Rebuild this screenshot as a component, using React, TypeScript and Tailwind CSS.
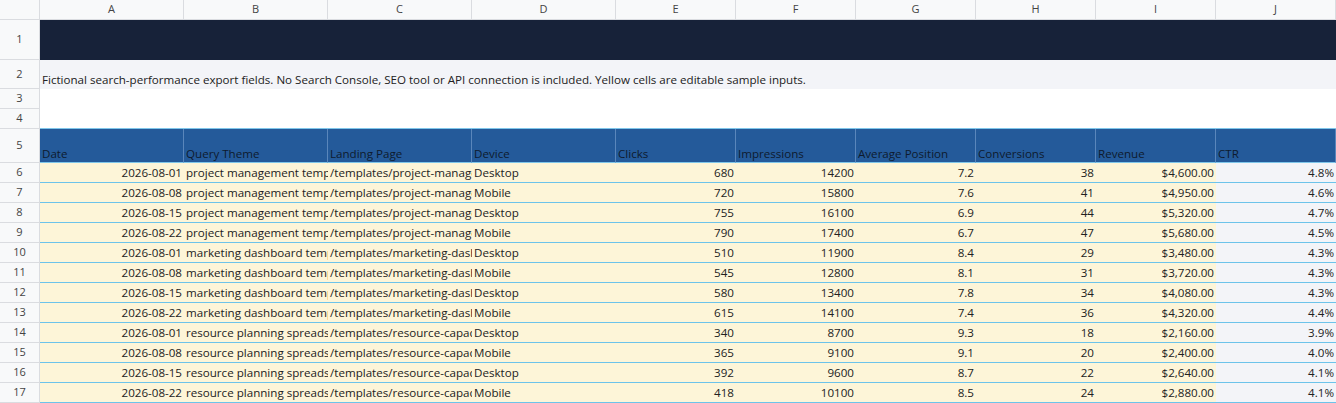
import * as React from "react"

const cols = ["A", "B", "C", "D", "E", "F", "G", "H", "I", "J"]
const heads = ["Date", "Query Theme", "Landing Page", "Device", "Clicks", "Impressions", "Average Position", "Conversions", "Revenue", "CTR"]

const rows: string[][] = [
  ["2026-08-01", "project management templates", "/templates/project-management", "Desktop", "680", "14200", "7.2", "38", "$4,600.00", "4.8%"],
  ["2026-08-08", "project management templates", "/templates/project-management", "Mobile", "720", "15800", "7.6", "41", "$4,950.00", "4.6%"],
  ["2026-08-15", "project management templates", "/templates/project-management", "Desktop", "755", "16100", "6.9", "44", "$5,320.00", "4.7%"],
  ["2026-08-22", "project management templates", "/templates/project-management", "Mobile", "790", "17400", "6.7", "47", "$5,680.00", "4.5%"],
  ["2026-08-01", "marketing dashboard templates", "/templates/marketing-dashboard", "Desktop", "510", "11900", "8.4", "29", "$3,480.00", "4.3%"],
  ["2026-08-08", "marketing dashboard templates", "/templates/marketing-dashboard", "Mobile", "545", "12800", "8.1", "31", "$3,720.00", "4.3%"],
  ["2026-08-15", "marketing dashboard templates", "/templates/marketing-dashboard", "Desktop", "580", "13400", "7.8", "34", "$4,080.00", "4.3%"],
  ["2026-08-22", "marketing dashboard templates", "/templates/marketing-dashboard", "Mobile", "615", "14100", "7.4", "36", "$4,320.00", "4.4%"],
  ["2026-08-01", "resource planning spreadsheet", "/templates/resource-capacity", "Desktop", "340", "8700", "9.3", "18", "$2,160.00", "3.9%"],
  ["2026-08-08", "resource planning spreadsheet", "/templates/resource-capacity", "Mobile", "365", "9100", "9.1", "20", "$2,400.00", "4.0%"],
  ["2026-08-15", "resource planning spreadsheet", "/templates/resource-capacity", "Desktop", "392", "9600", "8.7", "22", "$2,640.00", "4.1%"],
  ["2026-08-22", "resource planning spreadsheet", "/templates/resource-capacity", "Mobile", "418", "10100", "8.5", "24", "$2,880.00", "4.1%"],
]

const grid = "grid grid-cols-[40px_144px_144px_144px_144px_120px_120px_120px_120px_120px_120px]"
const rowHead = "flex items-center justify-center border-r border-b border-[#dadce0] bg-[#f8f9fa] text-[#444] text-[11px]"

export default function App() {
  return (
    <div className="w-[1336px] h-[403px] overflow-hidden bg-white text-[11.6px] text-[#222]" style={{ fontFamily: '"Open Sans", "Noto Sans", sans-serif' }}>
      <div className={`${grid} h-[20px]`}>
        <div className="border-r border-b border-[#dadce0] bg-[#f8f9fa]" />
        {cols.map((c) => (
          <div key={c} className="flex items-center justify-center border-r border-b border-[#dadce0] bg-[#f8f9fa] text-[#444] text-[11px]">{c}</div>
        ))}
      </div>
      <div className={`${grid} h-[40px]`}>
        <div className={rowHead}>1</div>
        <div className="col-span-10 bg-[#172239]" />
      </div>
      <div className={`${grid} h-[29px]`}>
        <div className={rowHead}>2</div>
        <div className="col-span-10 bg-[#f3f4f8] flex items-end pl-[2px] pb-[1px] whitespace-nowrap">
          Fictional search-performance export fields. No Search Console, SEO tool or API connection is included. Yellow cells are editable sample inputs.
        </div>
      </div>
      <div className={`${grid} h-[20px]`}>
        <div className={rowHead}>3</div>
        <div className="col-span-10" />
      </div>
      <div className={`${grid} h-[20px]`}>
        <div className={rowHead}>4</div>
        <div className="col-span-10 border-b border-[#7fc6ea]" />
      </div>
      <div className={`${grid} h-[34px]`}>
        <div className={rowHead}>5</div>
        {heads.map((h) => (
          <div key={h} className="flex items-end px-[2px] bg-[#245a9a] border-r border-[#5a86bb] border-b border-b-[#7fc6ea] text-[#0e1a2e] whitespace-nowrap overflow-hidden">{h}</div>
        ))}
      </div>
      {rows.map((r, i) => (
        <div key={i} className={`${grid} h-[20px]`}>
          <div className={rowHead}>{i + 6}</div>
          {r.map((v, j) => {
            const right = j === 0 || j >= 4
            return (
              <div
                key={j}
                className={`flex items-center px-[2px] whitespace-nowrap overflow-hidden border-b border-[#6cc3ea] ${right ? "justify-end" : "justify-start"} ${j === 9 ? "bg-[#f3f4f8]" : "bg-[#fdf5d8]"}`}
              >
                {v}
              </div>
            )
          })}
        </div>
      ))}
    </div>
  )
}
